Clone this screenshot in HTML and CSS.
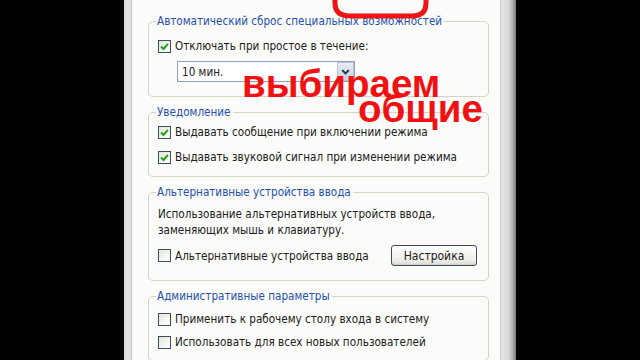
FILE: index.html
```html
<!DOCTYPE html>
<html lang="ru">
<head>
<meta charset="utf-8">
<title>Специальные возможности</title>
<link rel="stylesheet" href="styles.css">
</head>
<body>
<div class="screen">
  <div class="window">
    <div class="panel">
      <fieldset class="group g1">
        <legend>Автоматический сброс специальных возможностей</legend>
        <div class="check"><span class="box"><svg viewBox="0 0 11 11" width="11" height="11"><path d="M2 5.5 L4.5 8 L9 2.8" fill="none" stroke="#22a322" stroke-width="2"/></svg></span>Отключать при простое в течение:</div>
        <div class="select"><span class="value">10 мин.</span><span class="arrow"><svg viewBox="0 0 16 18" width="16" height="18"><path d="M4.5 7 L8 10.5 L11.5 7" fill="none" stroke="#1f2a4f" stroke-width="2"/></svg></span></div>
      </fieldset>

      <fieldset class="group g2">
        <legend>Уведомление</legend>
        <div class="check"><span class="box"><svg viewBox="0 0 11 11" width="11" height="11"><path d="M2 5.5 L4.5 8 L9 2.8" fill="none" stroke="#22a322" stroke-width="2"/></svg></span>Выдавать сообщение при включении режима</div>
        <div class="check second"><span class="box"><svg viewBox="0 0 11 11" width="11" height="11"><path d="M2 5.5 L4.5 8 L9 2.8" fill="none" stroke="#22a322" stroke-width="2"/></svg></span>Выдавать звуковой сигнал при изменении режима</div>
      </fieldset>

      <fieldset class="group g3">
        <legend>Альтернативные устройства ввода</legend>
        <p class="desc">Использование альтернативных устройств ввода,<br>заменяющих мышь и клавиатуру.</p>
        <div class="row">
          <div class="check"><span class="box"></span>Альтернативные устройства ввода</div>
          <button class="btn" type="button">Настройка</button>
        </div>
      </fieldset>

      <fieldset class="group g4">
        <legend>Административные параметры</legend>
        <div class="check"><span class="box"></span>Применить к рабочему столу входа в систему</div>
        <div class="check third"><span class="box"></span>Использовать для всех новых пользователей</div>
      </fieldset>
    </div>
  </div>

  <svg class="mark" width="640" height="30" viewBox="0 0 640 30">
    <path d="M335 -3 L335 3 Q335 16 350 16 L412 16 Q426 16 426 3 L426 -3" fill="none" stroke="#ec1616" stroke-width="5"/>
  </svg>
  <div class="caption c1">выбираем</div>
  <div class="caption c2">общие</div>
</div>
</body>
</html>
```

FILE: styles.css
```css
* { box-sizing: border-box; }

html, body {
  margin: 0;
  padding: 0;
  background: #000;
}

.screen {
  position: relative;
  width: 640px;
  height: 360px;
  overflow: hidden;
  background: #000;
  font-family: "DejaVu Sans Condensed", "DejaVu Sans", sans-serif;
  font-size: 11.6px;
  color: #202020;
}

.window {
  margin-left: 124px;
  width: 392px;
  height: 360px;
  display: flex;
  padding-left: 7px;
  padding-right: 15px;
  background: linear-gradient(to right,
    #dadada 0, #e2e2e2 7px,
    #e6e6e6 377px, #d6d6d6 385px, #a9a9a9 389px, #7a7a7a 392px);
}

.panel {
  flex: 1;
  background: #fbfbf9;
  border-left: 1px solid #c2c2c2;
  border-right: 1px solid #c6c6c6;
  padding: 14px 11px 0 16px;
  display: flex;
  flex-direction: column;
  gap: 8px;
}

.group {
  margin: 0;
  border: 1px solid #d3d3c6;
  border-radius: 5px;
  padding: 0 11px 0 9px;
  min-width: 0;
}

.group legend {
  margin-left: -2px;
  padding: 0 2px 0 1px;
  line-height: 14px;
  color: #2450ae;
}

.check {
  display: flex;
  align-items: center;
  height: 16px;
  line-height: 16px;
  white-space: nowrap;
}

.box {
  flex: none;
  width: 13px;
  height: 13px;
  margin-right: 4px;
  border: 1px solid #3a4f5e;
  background: linear-gradient(135deg, #e4e4dc 0%, #f6f6f2 60%, #ffffff 100%);
  display: flex;
  align-items: center;
  justify-content: center;
}

.box svg { display: block; }

.g1 { padding-top: 10px; padding-bottom: 14px; }

.select {
  margin-top: 7px;
  margin-left: 19px;
  width: 178px;
  height: 21px;
  border: 1px solid #8da2bd;
  background: #fff;
  display: flex;
  align-items: center;
  justify-content: space-between;
}

.select .value { padding-left: 4px; }

.select .arrow {
  width: 17px;
  height: 19px;
  border: 1px solid #b7c2d6;
  background: linear-gradient(#e9edf4, #c8d1de);
  display: flex;
  align-items: center;
  justify-content: center;
}

.select .arrow svg { display: block; }

.g2 { padding-top: 5px; padding-bottom: 11px; }
.g2 .second { margin-top: 9px; }

.g3 { padding-top: 7px; padding-bottom: 14px; }

.desc {
  margin: 0;
  line-height: 16px;
}

.row {
  margin-top: 7px;
  display: flex;
  align-items: center;
  justify-content: space-between;
}

.btn {
  width: 86px;
  height: 21px;
  padding: 0;
  font: inherit;
  font-size: 12px;
  color: #202020;
  border: 1px solid #3a4a66;
  border-radius: 3px;
  background: linear-gradient(#ffffff, #f0f0ea 70%, #dcdcd4);
  box-shadow: inset 0 -1px 0 #d0d0c8;
}

.g4 { padding-top: 8px; padding-bottom: 10px; }
.g4 .third { margin-top: 7px; }

.mark {
  position: absolute;
  left: 0;
  top: 0;
}

.caption {
  position: absolute;
  font-family: "Liberation Sans", Arial, sans-serif;
  font-weight: bold;
  font-size: 38.5px;
  line-height: 23px;
  color: #f01212;
  white-space: nowrap;
}

.c1 { left: 242px; top: 72px; }
.c2 { left: 358px; top: 97px; }
```
